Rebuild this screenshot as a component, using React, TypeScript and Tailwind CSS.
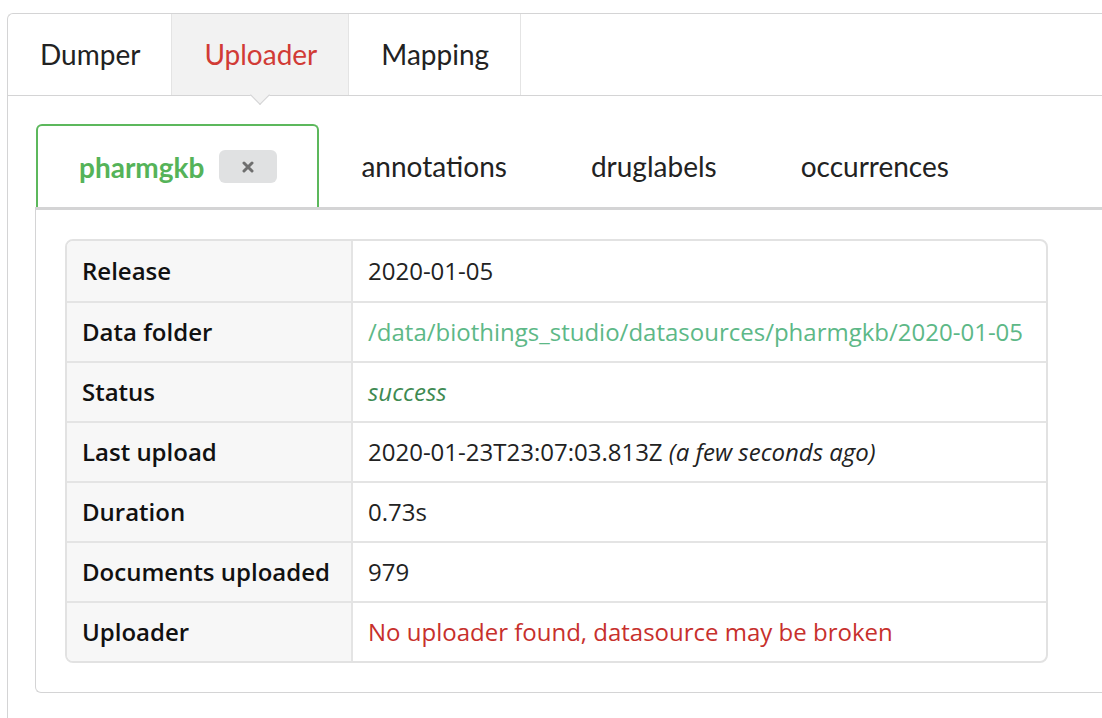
import { FC } from 'react';

const mainTabs = ['Dumper', 'Uploader', 'Mapping'];
const subTabs = ['annotations', 'druglabels', 'occurrences'];

type Row = { label: string; value: React.ReactNode };

const rows: Row[] = [
  { label: 'Release', value: '2020-01-05' },
  {
    label: 'Data folder',
    value: <span className="text-[#5db887]">/data/biothings_studio/datasources/pharmgkb/2020-01-05</span>,
  },
  { label: 'Status', value: <span className="italic text-[#3e8a52]">success</span> },
  {
    label: 'Last upload',
    value: (
      <span>
        2020-01-23T23:07:03.813Z <i>(a few seconds ago)</i>
      </span>
    ),
  },
  { label: 'Duration', value: '0.73s' },
  { label: 'Documents uploaded', value: '979' },
  {
    label: 'Uploader',
    value: <span className="text-[#c7302c]">No uploader found, datasource may be broken</span>,
  },
];

const App: FC = () => {
  return (
    <div className="w-[1102px] h-[718px] overflow-hidden bg-white pt-[13px] pl-[7px] font-['Lato',sans-serif] text-[#222]">
      <div className="h-[720px] border border-r-0 border-b-0 border-[#d4d4d5] rounded-tl-[6px]">
        {/* top tabs */}
        <div className="flex h-[82px] border-b border-[#d4d4d5]">
          {mainTabs.map((t) => {
            const active = t === 'Uploader';
            return (
              <div
                key={t}
                className={`relative flex items-center pl-[32px] pr-[31px] border-r border-[#e4e4e4] text-[28px] leading-none pb-[2px] ${
                  active ? 'bg-[#f2f2f2] text-[#d13b36]' : ''
                }`}
              >
                {t}
                {active && (
                  <span className="absolute left-1/2 -bottom-[7px] w-[14px] h-[14px] -translate-x-1/2 rotate-45 bg-[#f2f2f2] border-r border-b border-[#d4d4d5]" />
                )}
              </div>
            );
          })}
        </div>

        <div className="pl-[28px] pt-[28px]">
          {/* datasource tabs */}
          <div className="flex items-stretch h-[83px]">
            <div className="flex items-center gap-[15px] pl-[41px] pr-[40px] border-2 border-b-0 border-[#5cb85c] rounded-t-[6px]">
              <span className="font-bold text-[28px] text-[#55b359]">pharmgkb</span>
              <span className="flex items-center justify-center w-[58px] h-[33px] rounded-[6px] bg-[#e0e1e2] text-[#6f6f6f]">
                <svg width="12" height="12" viewBox="0 0 12 12">
                  <path d="M2 2 L10 10 M10 2 L2 10" stroke="currentColor" strokeWidth="3" strokeLinecap="round" />
                </svg>
              </span>
            </div>
            {subTabs.map((t) => (
              <div key={t} className="flex items-center px-[42px] text-[28px]">
                {t}
              </div>
            ))}
          </div>

          {/* panel */}
          <div className="-ml-px border-t-[3px] border-t-[#d4d4d5] border-l border-b border-[#d4d4d5] rounded-bl-[6px] pl-[29px] pt-[29px] pb-[29px]">
            <div className="w-[983px] border-2 border-[#e2e2e2] rounded-[8px] overflow-hidden text-[24px] font-['Open_Sans',sans-serif]">
              {rows.map((r, i) => (
                <div key={r.label} className={`flex h-[60px] ${i > 0 ? 'border-t-2 border-[#e4e4e4]' : ''}`}>
                  <div className="w-[286px] shrink-0 flex items-center pl-[15px] bg-[#f7f7f7] border-r-2 border-[#e4e4e4] font-semibold text-[#111]">
                    {r.label}
                  </div>
                  <div className="flex items-center pl-[15px] text-[#222]">{r.value}</div>
                </div>
              ))}
            </div>
          </div>
        </div>
      </div>
    </div>
  );
};

export default App;
